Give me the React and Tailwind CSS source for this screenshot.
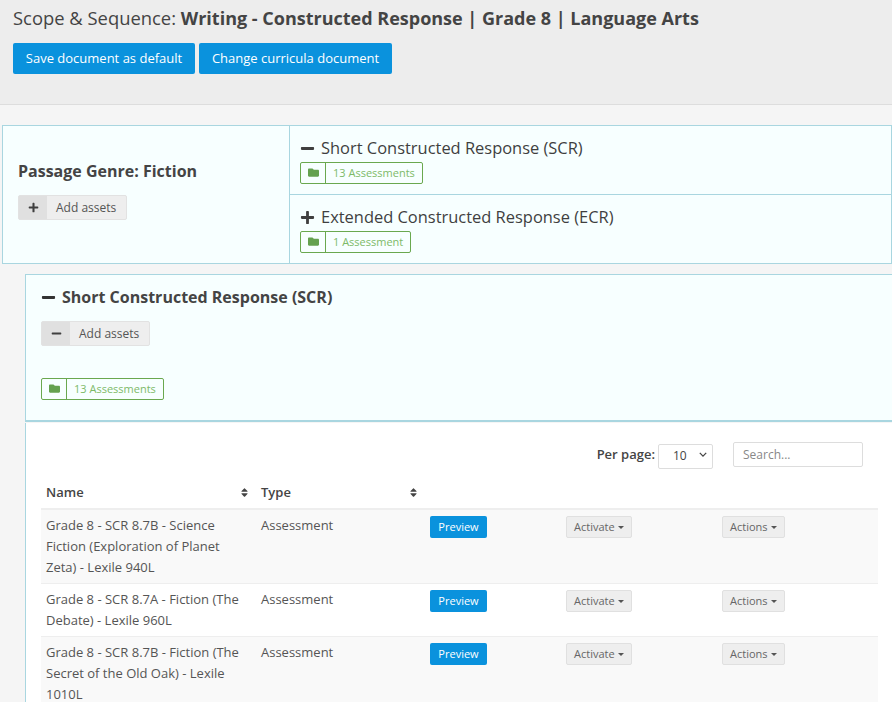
import { FaFolder, FaPlus, FaMinus, FaSort } from 'react-icons/fa';

const rows = [
    { name: 'Grade 8 - SCR 8.7B - Science Fiction (Exploration of Planet Zeta) - Lexile 940L', striped: true },
    { name: 'Grade 8 - SCR 8.7A - Fiction (The Debate) - Lexile 960L', striped: false },
    { name: 'Grade 8 - SCR 8.7B - Fiction (The Secret of the Old Oak) - Lexile 1010L', striped: true },
];

function CountBadge({ label }) {
    return (
        <div className="inline-flex h-[22px] items-stretch rounded-[2px] border border-[#6aa84f] text-[11px] text-[#7dba68]">
            <span className="flex w-[25px] items-center justify-center border-r border-[#6aa84f]">
                <FaFolder size={11} className="text-[#64a14f] -translate-y-[1px]" />
            </span>
            <span className="flex items-center px-[7px]">{label}</span>
        </div>
    );
}

function AddAssets({ icon }) {
    return (
        <div className="inline-flex h-[25px] items-stretch rounded-[2px] border border-[#e2e2e2] bg-[#eeeeee] text-xs text-[#555555]">
            <span className="flex w-[28px] items-center justify-center bg-[#e0e0e0] text-[#3f3f3f]">{icon}</span>
            <span className="flex items-center pl-[9px] pr-[10px]">Add assets</span>
        </div>
    );
}

function DropButton({ label }) {
    return (
        <button className="inline-flex h-[22px] items-center gap-[3px] rounded-[2px] border border-[#e0e0e0] bg-[#eeeeee] px-[7px] text-[11px] text-[#666666]">
            {label}
            <span className="h-0 w-0 border-x-[3px] border-t-[3px] border-x-transparent border-t-[#555555]" />
        </button>
    );
}

function SectionRow({ icon, title, count, last }) {
    return (
        <div className={last ? 'h-[68px] pl-[10px] pt-[10px]' : 'h-[69px] border-b border-[#a9d6e0] pl-[10px] pt-[10px]'}>
            <div className="flex h-[24px] items-center gap-[6px] text-[16.45px] text-[#3f3f3f]">
                {icon}
                <span>{title}</span>
            </div>
            <div className="mt-[2px] flex">
                <CountBadge label={count} />
            </div>
        </div>
    );
}

export default function App() {
    return (
        <div className="h-screen overflow-hidden bg-[#f5f5f5] font-['Open_Sans',sans-serif] text-[#555555]">
            {/* Header */}
            <div className="h-[105px] border-b border-[#dddddd] bg-[#ededed] pl-[13px] pt-[4px]">
                <h1 className="text-[18.4px] leading-[26px] text-[#444444]">
                    Scope &amp; Sequence: <span className="text-lg font-bold">Writing - Constructed Response | Grade 8 | Language Arts</span>
                </h1>
                <div className="mt-[11px] flex gap-[4px]">
                    <button className="h-[31px] w-[182px] rounded-[2px] bg-[#0a92dd] text-[13px] text-white">Save document as default</button>
                    <button className="h-[31px] w-[193px] rounded-[2px] bg-[#0a92dd] text-[13px] text-white">Change curricula document</button>
                </div>
            </div>

            {/* Genre table */}
            <div className="ml-[2px] mt-[20px] flex h-[139px] border border-[#a9d6e0] bg-[#f7ffff]">
                <div className="w-[287px] border-r border-[#a9d6e0] pl-[15px] pt-[33px]">
                    <h2 className="text-base font-bold leading-[24px] text-[#444444]">Passage Genre: Fiction</h2>
                    <div className="mt-[12px] flex">
                        <AddAssets icon={<FaPlus size={11} />} />
                    </div>
                </div>
                <div className="flex-1">
                    <SectionRow icon={<FaMinus size={15} />} title="Short Constructed Response (SCR)" count="13 Assessments" />
                    <SectionRow icon={<FaPlus size={15} />} title="Extended Constructed Response (ECR)" count="1 Assessment" last />
                </div>
            </div>

            {/* Expanded section */}
            <div className="ml-[25px] mt-[10px] h-[148px] border-b-2 border-l border-t border-[#a9d6e0] bg-[#f7ffff] pl-[15px] pt-[10px]">
                <div className="flex h-[24px] items-center gap-[6px] text-base font-bold text-[#444444]">
                    <FaMinus size={15} className="text-[#333333]" />
                    <span>Short Constructed Response (SCR)</span>
                </div>
                <div className="mt-[12px] flex">
                    <AddAssets icon={<FaMinus size={11} />} />
                </div>
                <div className="mt-[32px] flex">
                    <CountBadge label="13 Assessments" />
                </div>
            </div>

            {/* Assets table */}
            <div className="ml-[25px] mt-px border-l border-[#a9d6e0] bg-white pl-[15px] pr-[14px] pt-[19px]">
                <div className="flex h-[25px] items-center justify-end pr-[15px]">
                    <span className="text-[13px] font-semibold text-[#444444]">Per page:</span>
                    <div className="relative ml-[3px] h-[25px] w-[55px]">
                        <select className="h-full w-full appearance-none rounded-[2px] border border-[#dddddd] bg-white pl-[14px] text-xs text-[#444444]">
                            <option>10</option>
                        </select>
                        <svg viewBox="0 0 10 6" className="pointer-events-none absolute right-[6px] top-[10px] h-[5px] w-[8px]">
                            <path d="M1 1l4 4 4-4" fill="none" stroke="#444444" strokeWidth="1.6" />
                        </svg>
                    </div>
                    <input
                        placeholder="Search..."
                        className="ml-[20px] h-[25px] w-[130px] rounded-[2px] border border-[#dddddd] bg-white px-[9px] text-xs text-[#555555] placeholder:text-[#888888]"
                    />
                </div>
                <table className="mt-[11px] w-[837px] table-fixed border-collapse text-[13px]">
                    <colgroup>
                        <col className="w-[215px]" />
                        <col className="w-[169px]" />
                        <col className="w-[136px]" />
                        <col className="w-[156px]" />
                        <col className="w-[161px]" />
                    </colgroup>
                    <thead>
                        <tr className="h-[31px] border-b-2 border-[#eeeeee] text-left text-[#444444]">
                            <th className="pb-px pl-[5px] pr-[6px] font-semibold">
                                <div className="flex items-center justify-between">
                                    Name
                                    <FaSort size={11} className="text-[#444444]" />
                                </div>
                            </th>
                            <th className="pb-px pl-[5px] pr-[6px] font-semibold">
                                <div className="flex items-center justify-between">
                                    Type
                                    <FaSort size={11} className="text-[#444444]" />
                                </div>
                            </th>
                            <th />
                            <th />
                            <th />
                        </tr>
                    </thead>
                    <tbody>
                        {rows.map(row => (
                            <tr key={row.name} className={row.striped ? 'border-b border-[#eeeeee] bg-[#f9f9f9]' : 'border-b border-[#eeeeee]'}>
                                <td className="py-[5px] pl-[5px] pr-[10px] align-top leading-[21px]">{row.name}</td>
                                <td className="py-[5px] pl-[5px] align-top leading-[21px]">Assessment</td>
                                <td className="pl-[5px] pt-[6px] align-top">
                                    <button className="h-[22px] w-[57px] rounded-[2px] bg-[#0a92dd] text-[11px] text-white">Preview</button>
                                </td>
                                <td className="pl-[5px] pt-[6px] align-top"><DropButton label="Activate" /></td>
                                <td className="pl-[5px] pt-[6px] align-top"><DropButton label="Actions" /></td>
                            </tr>
                        ))}
                    </tbody>
                </table>
            </div>
        </div>
    );
}
